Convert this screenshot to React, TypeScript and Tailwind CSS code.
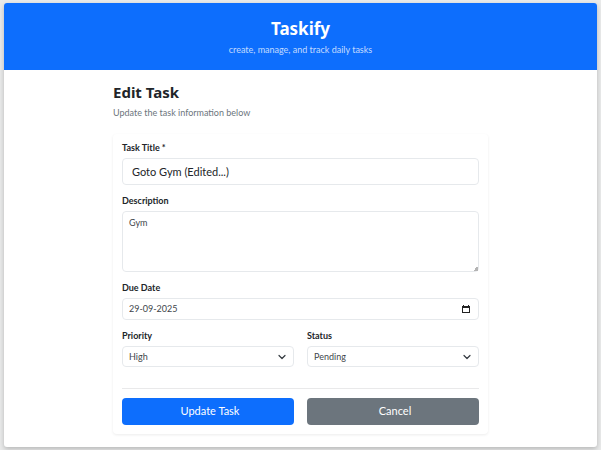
import { useState } from "react";
import type { ReactNode } from "react";

const control =
  "w-full rounded-[4px] border border-[#e6e9ec] bg-white text-[#41464b] outline-none focus:border-[#86b7fe]";

function Field({ id, label, children }: { id: string; label: string; children: ReactNode }) {
  return (
    <div className="flex min-w-0 flex-col gap-1">
      <label htmlFor={id} className="text-[9px] leading-3 font-bold text-[#212529]">
        {label}
      </label>
      {children}
    </div>
  );
}

function Select({ id, options }: { id: string; options: string[] }) {
  const [value, setValue] = useState(options[0]);
  return (
    <div className="relative">
      <select
        id={id}
        value={value}
        onChange={(e) => setValue(e.target.value)}
        className={`${control} block h-[21px] appearance-none px-1.5 text-[9px]`}
      >
        {options.map((o) => (
          <option key={o}>{o}</option>
        ))}
      </select>
      <svg
        viewBox="0 0 16 16"
        className="pointer-events-none absolute top-1/2 right-2 size-2 -translate-y-1/2"
        fill="none"
        stroke="#343a40"
        strokeWidth="2.4"
        strokeLinecap="round"
        strokeLinejoin="round"
        aria-hidden="true"
      >
        <path d="m2 5 6 6 6-6" />
      </svg>
    </div>
  );
}

export default function App() {
  const [title, setTitle] = useState("Goto Gym (Edited...)");
  const [description, setDescription] = useState("Gym");
  const [dueDate, setDueDate] = useState("29-09-2025");

  return (
    <div className="min-h-screen bg-[#e9eaea] px-1 py-[3px] font-['Lato','Open_Sans',sans-serif]">
      <div className="flex min-h-[calc(100vh-6px)] flex-col overflow-hidden rounded-[3px] bg-white shadow-[0_2px_5px_rgba(0,0,0,0.22)]">
        <header className="bg-[#0d6efd] pt-3.5 pb-3.5 text-center text-white">
          <h1 className="font-['Noto_Sans','Open_Sans',sans-serif] text-[17px] leading-6 font-bold">Taskify</h1>
          <p className="mt-[3px] text-[9px] leading-3 text-white/75">create, manage, and track daily tasks</p>
        </header>

        <main className="mx-auto w-full max-w-[375px] pt-3 pb-3">
          <h2 className="font-['Noto_Sans','Open_Sans',sans-serif] text-[15px] leading-5 font-bold text-[#212529]">
            Edit Task
          </h2>
          <p className="mt-[3px] text-[9px] leading-4 text-[#6c757d]">Update the task information below</p>

          <form
            onSubmit={(e) => e.preventDefault()}
            className="mt-[13px] rounded-[4px] px-[9px] pt-2 pb-[9px] shadow-[0_1px_3px_rgba(0,0,0,0.08)]"
          >
            <div className="flex flex-col gap-2.5">
              <Field id="title" label="Task Title *">
                <input
                  id="title"
                  value={title}
                  onChange={(e) => setTitle(e.target.value)}
                  className={`${control} h-[27px] px-[9px] text-[11px] text-[#212529]`}
                />
              </Field>

              <Field id="description" label="Description">
                <textarea
                  id="description"
                  value={description}
                  onChange={(e) => setDescription(e.target.value)}
                  className={`${control} block h-[61px] resize-y px-1.5 py-1 text-[9px] leading-3.5 [&::-webkit-resizer]:bg-[linear-gradient(135deg,transparent_50%,#b4b4b4_50%)] [&::-webkit-resizer]:bg-[length:5px_5px] [&::-webkit-resizer]:bg-right-bottom [&::-webkit-resizer]:bg-no-repeat`}
                />
              </Field>

              <Field id="due" label="Due Date">
                <div className={`${control} flex h-[22px] items-center pr-2 pl-1.5`}>
                  <input
                    id="due"
                    value={dueDate}
                    onChange={(e) => setDueDate(e.target.value)}
                    className="min-w-0 flex-1 text-[9px] outline-none"
                  />
                  <button type="button" aria-label="Open calendar">
                    <svg viewBox="0 0 8 8" className="size-2" shapeRendering="crispEdges" aria-hidden="true">
                      <path d="M1 0h1v1h4V0h1v1h1v7H0V1h1z" fill="#222" />
                      <path d="M1 3h6v4H1z" fill="#fff" />
                    </svg>
                  </button>
                </div>
              </Field>

              <div className="grid grid-cols-2 gap-[13px]">
                <Field id="priority" label="Priority">
                  <Select id="priority" options={["High", "Medium", "Low"]} />
                </Field>
                <Field id="status" label="Status">
                  <Select id="status" options={["Pending", "In Progress", "Completed"]} />
                </Field>
              </div>
            </div>

            <hr className="mt-[21px] mb-[9px] border-[#e9e9ea]" />

            <div className="grid grid-cols-2 gap-[13px]">
              <button type="submit" className="h-[27px] rounded-[4px] bg-[#0d6efd] pl-1 text-[11px] text-white">
                Update Task
              </button>
              <button type="button" className="h-[27px] rounded-[4px] bg-[#6c757d] pl-1 text-[11px] text-white">
                Cancel
              </button>
            </div>
          </form>
        </main>
      </div>
    </div>
  );
}
